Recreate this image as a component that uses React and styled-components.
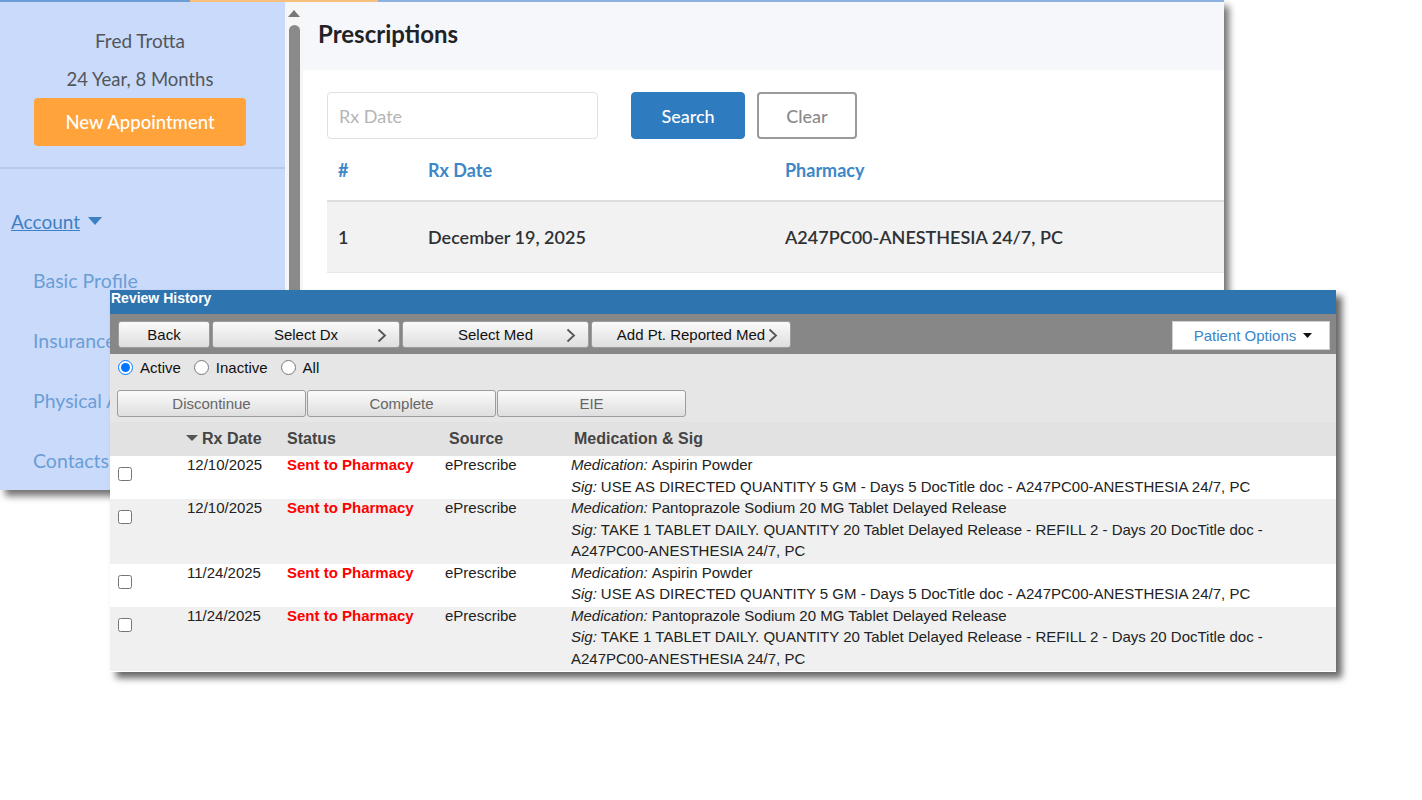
import styled, { createGlobalStyle } from "styled-components";

const GlobalStyle = createGlobalStyle`
  html, body {
    margin: 0;
    padding: 0;
    background: #ffffff;
  }
`;

const Stage = styled.div`
  position: relative;
  width: 1422px;
  height: 800px;
  overflow: hidden;
  background: #ffffff;
`;

/* background window: patient portal */
const PortalWindow = styled.div`
  position: absolute;
  left: 0;
  top: 0;
  width: 1224px;
  height: 490px;
  display: flex;
  flex-direction: column;
  background: #ffffff;
  box-shadow: 5px 6px 7px rgba(0, 0, 0, 0.55);
  font-family: Lato, "Open Sans", sans-serif;
  overflow: hidden;
`;

const TopStripe = styled.div`
  height: 2px;
  flex: none;
  background: linear-gradient(
    to right,
    #6d9fd6 0 190px,
    #f7bf7c 190px 378px,
    #8cb3e0 378px
  );
`;

const PortalBody = styled.div`
  flex: 1;
  display: flex;
  min-height: 0;
`;

const Sidebar = styled.aside`
  width: 285px;
  flex: none;
  background: #cadafa;
  display: flex;
  flex-direction: column;
`;

const Profile = styled.div`
  display: flex;
  flex-direction: column;
  align-items: center;
  padding: 20px 5px 21px 0;
  border-bottom: 2px solid #b7c8e8;
  color: #51565c;
  font-size: 19px;
  line-height: 38px;
`;

const AgeLine = styled.span`
  font-size: 18.5px;
`;

const OrangeButton = styled.button`
  width: 212px;
  height: 48px;
  border: none;
  border-radius: 4px;
  background: #ffa33a;
  color: #ffffff;
  font-family: inherit;
  font-size: 18.5px;
  font-weight: 500;
`;

const Nav = styled.nav`
  display: flex;
  flex-direction: column;
  padding-top: 38px;
`;

const AccountLink = styled.a`
  display: flex;
  align-items: center;
  gap: 8px;
  padding-left: 11px;
  height: 28px;
  color: #3d80c3;
  font-size: 19px;
  text-decoration: underline;
  margin-bottom: 32px;
`;

const NavItem = styled.a`
  padding-left: 33px;
  height: 60px;
  line-height: 28px;
  color: #6a9ed6;
  font-size: 19.5px;
  text-decoration: none;
`;

const ScrollTrack = styled.div`
  width: 18px;
  flex: none;
  background: #f6f6f6;
  display: flex;
  flex-direction: column;
  align-items: center;
  padding-top: 8px;
  gap: 8px;
`;

const ScrollThumb = styled.div`
  width: 11px;
  flex: 1;
  background: #8a8a8a;
  border-radius: 6px 6px 0 0;
`;

const Main = styled.main`
  flex: 1;
  display: flex;
  flex-direction: column;
  min-width: 0;
`;

const MainHeader = styled.div`
  height: 68px;
  box-sizing: border-box;
  flex: none;
  background: #f5f7fa;
  display: flex;
  align-items: center;
  padding: 0 0 6px 15px;
  font-size: 24px;
  font-weight: 700;
  color: #1f2328;
`;

const SearchRow = styled.div`
  display: flex;
  align-items: center;
  padding: 22px 0 0 24px;
  gap: 12px;
`;

const DateInput = styled.input`
  width: 271px;
  height: 47px;
  box-sizing: border-box;
  border: 1px solid #e0e0e0;
  border-radius: 4px;
  padding: 0 11px;
  font-family: inherit;
  font-size: 18px;
  margin-right: 21px;
  &::placeholder {
    color: #b5b5b5;
  }
`;

const FormButton = styled.button`
  height: 47px;
  width: ${(p) => p.$w}px;
  box-sizing: border-box;
  border-radius: 4px;
  font-family: inherit;
  font-size: 18px;
  font-weight: 500;
  border: ${(p) => (p.$primary ? "1px solid #2f7bbf" : "2px solid #9a9a9a")};
  background: ${(p) => (p.$primary ? "#2f7bbf" : "#ffffff")};
  color: ${(p) => (p.$primary ? "#ffffff" : "#8a8a8a")};
`;

const RxTable = styled.div`
  margin-left: 24px;
  width: 960px;
`;

const RxRow = styled.div`
  display: grid;
  grid-template-columns: 90px 357px 1fr;
  align-items: center;
  height: ${(p) => (p.$head ? "61px" : "70px")};
  background: ${(p) => (p.$head ? "transparent" : "#f2f2f2")};
  border-top: ${(p) => (p.$head ? "none" : "2px solid #dedede")};
  border-bottom: ${(p) => (p.$head ? "none" : "1px solid #e8e8e8")};
  color: ${(p) => (p.$head ? "#3d87c9" : "#2e3135")};
  font-size: 18px;
  font-weight: ${(p) => (p.$head ? 700 : 600)};
  & > span {
    padding-left: 11px;
  }
`;

/* overlay window: review history */
const ReviewWindow = styled.div`
  position: absolute;
  left: 110px;
  top: 290px;
  width: 1226px;
  height: 382px;
  background: #ffffff;
  display: flex;
  flex-direction: column;
  box-shadow: 6px 6px 7px rgba(0, 0, 0, 0.6);
  font-family: "Liberation Sans", Arial, sans-serif;
  overflow: hidden;
`;

const TitleBar = styled.div`
  height: 24px;
  box-sizing: border-box;
  flex: none;
  background: #2e74ae;
  color: #ffffff;
  font-size: 14px;
  font-weight: 700;
  line-height: 17px;
  padding: 0 0 0 1px;
`;

const Toolbar = styled.div`
  height: 40px;
  flex: none;
  box-sizing: border-box;
  background: #878787;
  display: flex;
  align-items: flex-start;
  gap: 2px;
  padding: 7px 6px 0 8px;
`;

const ToolButton = styled.button`
  position: relative;
  width: ${(p) => p.$w}px;
  height: 27px;
  box-sizing: border-box;
  border: 1px solid #9c9c9c;
  border-radius: 3px;
  background: linear-gradient(#fbfbfb, #dedede);
  font-family: inherit;
  font-size: 15px;
  color: ${(p) => (p.$dim ? "#666666" : "#111111")};
  padding: 0 ${(p) => (p.$chev ? "16px" : "0")};
`;

const Chevron = styled.svg`
  position: absolute;
  right: 12px;
  top: 6px;
`;

const OptionsButton = styled.button`
  margin-left: auto;
  width: 158px;
  height: 29px;
  box-sizing: border-box;
  border: 1px solid #d0d0d0;
  background: #ffffff;
  font-family: inherit;
  font-size: 15px;
  color: #3a86c8;
  display: flex;
  align-items: center;
  justify-content: center;
  gap: 7px;
  padding-left: 10px;
`;

const FilterArea = styled.div`
  background: #e6e6e6;
  padding: 0 0 5px 7px;
  display: flex;
  flex-direction: column;
`;

const RadioRow = styled.div`
  height: 26px;
  display: flex;
  align-items: center;
  font-size: 15px;
  color: #111;
  padding-left: 1px;
`;

const RadioLabel = styled.label`
  display: flex;
  align-items: center;
  gap: 7px;
  margin-right: 13px;
  input {
    width: 15px;
    height: 15px;
    margin: 0;
  }
`;

const ActionRow = styled.div`
  display: flex;
  gap: 1px;
  margin-top: 10px;
`;

const MedTable = styled.table`
  border-collapse: collapse;
  table-layout: fixed;
  width: 100%;
  font-size: 15px;
  color: #222;
`;

const HeadCell = styled.th`
  height: 34px;
  background: #e2e2e2;
  text-align: left;
  font-size: 16px;
  font-weight: 700;
  color: #444;
  padding: 0 0 0 ${(p) => p.$pad || 0}px;
  white-space: nowrap;
`;

const Row = styled.tr`
  background: ${(p) => (p.$alt ? "#f0f0f0" : "#ffffff")};
`;

const Cell = styled.td`
  vertical-align: top;
  padding: 0 0 0 ${(p) => p.$pad || 0}px;
  line-height: 21.5px;
  color: ${(p) => (p.$status ? "#ff0000" : "#222")};
  font-weight: ${(p) => (p.$status ? 700 : 400)};
  white-space: ${(p) => (p.$wrap ? "normal" : "nowrap")};
  input {
    width: 14px;
    height: 14px;
    margin: 11px 0 0 8px;
  }
`;

const CellText = styled.div`
  margin-top: -2px;
  margin-bottom: 2px;
`;

const Label = styled.i`
  margin-right: 4px;
`;

const SortArrow = styled.span`
  display: inline-block;
  width: 0;
  height: 0;
  border-left: 6px solid transparent;
  border-right: 6px solid transparent;
  border-top: 6px solid #555;
  vertical-align: middle;
  margin-right: 4px;
  position: relative;
  top: -2px;
`;

const ChevronIcon = () => (
  <Chevron width="10" height="15" viewBox="0 0 10 15">
    <polyline points="1.5,1.5 8,7.5 1.5,13.5" fill="none" stroke="#555" strokeWidth="1.8" />
  </Chevron>
);

const meds = [
  {
    date: "12/10/2025",
    med: "Aspirin Powder",
    sig: "USE AS DIRECTED QUANTITY 5 GM - Days 5 DocTitle doc - A247PC00-ANESTHESIA 24/7, PC",
  },
  {
    date: "12/10/2025",
    med: "Pantoprazole Sodium 20 MG Tablet Delayed Release",
    sig: "TAKE 1 TABLET DAILY. QUANTITY 20 Tablet Delayed Release - REFILL 2 - Days 20 DocTitle doc - A247PC00-ANESTHESIA 24/7, PC",
  },
  {
    date: "11/24/2025",
    med: "Aspirin Powder",
    sig: "USE AS DIRECTED QUANTITY 5 GM - Days 5 DocTitle doc - A247PC00-ANESTHESIA 24/7, PC",
  },
  {
    date: "11/24/2025",
    med: "Pantoprazole Sodium 20 MG Tablet Delayed Release",
    sig: "TAKE 1 TABLET DAILY. QUANTITY 20 Tablet Delayed Release - REFILL 2 - Days 20 DocTitle doc - A247PC00-ANESTHESIA 24/7, PC",
  },
];

function Portal() {
  return (
    <PortalWindow>
      <TopStripe />
      <PortalBody>
        <Sidebar>
          <Profile>
            <span>Fred Trotta</span>
            <AgeLine>24 Year, 8 Months</AgeLine>
            <OrangeButton>New Appointment</OrangeButton>
          </Profile>
          <Nav>
            <AccountLink>
              Account
              <svg width="14" height="9" viewBox="0 0 14 9">
                <polygon points="0,0 14,0 7,8" fill="#3d80c3" />
              </svg>
            </AccountLink>
            <NavItem>Basic Profile</NavItem>
            <NavItem>Insurance</NavItem>
            <NavItem>Physical Activity</NavItem>
            <NavItem>Contacts</NavItem>
          </Nav>
        </Sidebar>
        <ScrollTrack>
          <svg width="12" height="7" viewBox="0 0 12 7">
            <polygon points="0,7 12,7 6,0" fill="#777" />
          </svg>
          <ScrollThumb />
        </ScrollTrack>
        <Main>
          <MainHeader>Prescriptions</MainHeader>
          <SearchRow>
            <DateInput placeholder="Rx Date" />
            <FormButton $primary $w={114}>Search</FormButton>
            <FormButton $w={100}>Clear</FormButton>
          </SearchRow>
          <RxTable>
            <RxRow $head>
              <span>#</span>
              <span>Rx Date</span>
              <span>Pharmacy</span>
            </RxRow>
            <RxRow>
              <span>1</span>
              <span>December 19, 2025</span>
              <span>A247PC00-ANESTHESIA 24/7, PC</span>
            </RxRow>
          </RxTable>
        </Main>
      </PortalBody>
    </PortalWindow>
  );
}

function ReviewHistory() {
  return (
    <ReviewWindow>
      <TitleBar>Review History</TitleBar>
      <Toolbar>
        <ToolButton $w={92}>Back</ToolButton>
        <ToolButton $w={188} $chev>
          Select Dx
          <ChevronIcon />
        </ToolButton>
        <ToolButton $w={187} $chev>
          Select Med
          <ChevronIcon />
        </ToolButton>
        <ToolButton $w={200} $chev>
          Add Pt. Reported Med
          <ChevronIcon />
        </ToolButton>
        <OptionsButton>
          Patient Options
          <svg width="9" height="5" viewBox="0 0 9 5">
            <polygon points="0,0 9,0 4.5,5" fill="#111" />
          </svg>
        </OptionsButton>
      </Toolbar>
      <FilterArea>
        <RadioRow>
          <RadioLabel>
            <input type="radio" name="state" defaultChecked />
            Active
          </RadioLabel>
          <RadioLabel>
            <input type="radio" name="state" />
            Inactive
          </RadioLabel>
          <RadioLabel>
            <input type="radio" name="state" />
            All
          </RadioLabel>
        </RadioRow>
        <ActionRow>
          <ToolButton $w={189} $dim>Discontinue</ToolButton>
          <ToolButton $w={189} $dim>Complete</ToolButton>
          <ToolButton $w={189} $dim>EIE</ToolButton>
        </ActionRow>
      </FilterArea>
      <MedTable>
        <colgroup>
          <col style={{ width: 76 }} />
          <col style={{ width: 101 }} />
          <col style={{ width: 158 }} />
          <col style={{ width: 126 }} />
          <col />
        </colgroup>
        <thead>
          <tr>
            <HeadCell />
            <HeadCell>
              <SortArrow />
              Rx Date
            </HeadCell>
            <HeadCell>Status</HeadCell>
            <HeadCell $pad={4}>Source</HeadCell>
            <HeadCell $pad={3}>Medication &amp; Sig</HeadCell>
          </tr>
        </thead>
        <tbody>
          {meds.map((m, i) => (
            <Row key={i} $alt={i % 2 === 1}>
              <Cell>
                <input type="checkbox" />
              </Cell>
              <Cell $pad={1}>
                <CellText>{m.date}</CellText>
              </Cell>
              <Cell $status>
                <CellText>Sent to Pharmacy</CellText>
              </Cell>
              <Cell>
                <CellText>ePrescribe</CellText>
              </Cell>
              <Cell $wrap>
                <CellText>
                  <Label>Medication:</Label>
                  {m.med}
                  <br />
                  <Label>Sig:</Label>
                  {m.sig}
                </CellText>
              </Cell>
            </Row>
          ))}
        </tbody>
      </MedTable>
    </ReviewWindow>
  );
}

export default function App() {
  return (
    <>
      <GlobalStyle />
      <Stage>
        <Portal />
        <ReviewHistory />
      </Stage>
    </>
  );
}
